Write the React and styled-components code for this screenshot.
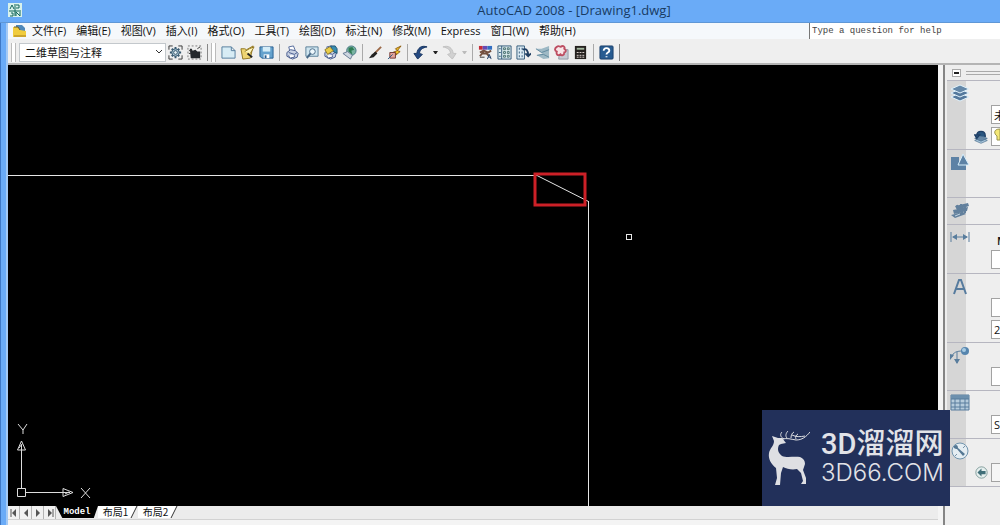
import React from 'react';
import styled, {createGlobalStyle} from "styled-components";


const GlobalStyle = createGlobalStyle`
  * {
    box-sizing: border-box;
  }

  body {
    margin: 0;
    font-family: "Open Sans", "Noto Sans CJK SC", sans-serif;
    color: #111;
    background: #6aabf7;
  }

  button, input, select {
    font: inherit;
    color: inherit;
    margin: 0;
    padding: 0;
    border: 0;
    border-radius: 0;
    background: none;
  }
`

const Window = styled.div`
  display: flex;
  flex-direction: column;
  height: 100vh;
  overflow: hidden;
  padding-left: 8px;
  background: linear-gradient(to right, #3e78c6 0 1px, #6aabf7 1px 6px, #a3c9f5 6px 8px);
`

const TitleBar = styled.header`
  display: grid;
  grid-template-columns: 16px 1fr 16px;
  align-items: center;
  height: 23px;
  margin-left: -8px;
  padding: 0 8px 3px;
  background: #6aabf7;
  border-bottom: 1px solid #5f97d6;
  flex: none;
`

const Title = styled.h1`
  margin: 0;
  padding-left: 148px;
  text-align: center;
  font-size: 13px;
  font-weight: 400;
  line-height: 18px;
  color: #183b63;
`

const MenuBar = styled.nav`
  display: flex;
  align-items: center;
  height: 16px;
  flex: none;
  padding-left: 5px;
  background: #f5f8fb;
`

const MenuList = styled.div`
  display: flex;
  gap: 10px;
  margin-left: 6px;
  flex: 1;
`

const MenuButton = styled.button`
  font-family: "Open Sans", "Noto Sans CJK SC", sans-serif;
  font-size: 11px;
  line-height: 16px;
  white-space: nowrap;
`

const HelpInput = styled.input`
  width: 191px;
  height: 16px;
  padding-left: 2px;
  background: #fff;
  border-left: 1px solid #777;
  font-family: "Liberation Mono", monospace;
  font-size: 9px;

  &::placeholder {
    color: #444;
    opacity: 1;
  }
`

const ToolBar = styled.div`
  display: flex;
  align-items: center;
  height: 26px;
  flex: none;
  padding: 2px 0 0 3px;
  background: #efefef;
  border-bottom: 2px solid #b4b4b4;
`

const Grip = styled.span`
  width: 5px;
  height: 19px;
  margin-right: 3px;
  border: solid #bbb;
  border-width: 0 1px;
  background: #fff;
`

const WorkspaceSelect = styled.select`
  appearance: none;
  width: 147px;
  height: 19px;
  padding-left: 5px;
  border: 1px solid #c3c8cc;
  background: #fff;
  font-family: "Noto Sans CJK SC", sans-serif;
  font-size: 11px;
  line-height: 17px;
`

const SelectWrap = styled.label`
  display: grid;
  align-items: center;

  & > * {
    grid-area: 1 / 1;
  }

  svg {
    justify-self: end;
    margin-right: 3px;
    pointer-events: none;
  }
`

const ToolButton = styled.button`
  display: flex;
  align-items: center;
  justify-content: center;
  flex: none;
  width: ${p => p.$narrow ? '10px' : '19px'};
  height: 20px;
`

const Separator = styled.span`
  width: 1px;
  height: 17px;
  margin: 0 3px;
  background: ${p => p.$edge ? '#888' : '#a9a9a9'};
  flex: none;
`

const Workspace = styled.div`
  display: flex;
  flex: 1;
  min-height: 0;
  background: #f4f4f4;
`

const DrawingArea = styled.main`
  display: flex;
  flex-direction: column;
  flex: 1;
  min-width: 0;
`

const Canvas = styled.div`
  position: relative;
  flex: 1;
  min-height: 0;
  background: #000;
`

const Drawing = styled.svg`
  display: block;
  width: 100%;
  height: 100%;
`

const UcsIcon = styled.svg`
  position: absolute;
  left: 6px;
  bottom: 3px;
`

const TabBar = styled.div`
  display: flex;
  height: 14px;
  flex: none;
  margin-bottom: 5px;
  background: #ececec;
  border-bottom: 1px solid #d2d2d2;
`

const NavButton = styled.button`
  display: flex;
  align-items: center;
  justify-content: center;
  width: 12px;
  height: 13px;
  border-right: 1px solid #b5b5b5;
  background: #f1f1f1;
`

const ModelTab = styled.button`
  width: 42px;
  height: 12px;
  background: #000;
  color: #fff;
  clip-path: polygon(0 0, 100% 0, 90% 100%, 15% 100%);
  font-family: "Liberation Mono", monospace;
  font-size: 9px;
  font-weight: 700;
  line-height: 12px;
`

const LayoutTab = styled.button`
  width: 32px;
  height: 12px;
  padding-left: 3px;
  background: #fff;
  font-family: "Noto Sans CJK SC", sans-serif;
  font-size: 10px;
  line-height: 12px;
  white-space: nowrap;
`

const Dashboard = styled.aside`
  width: 57px;
  flex: none;
  overflow: hidden;
  margin-left: 5px;
  border-left: 2px solid #858585;
  background: #eee;
`

const DashHead = styled.div`
  display: flex;
  align-items: center;
  gap: 5px;
  height: 15px;
  padding-left: 7px;
`

const CollapseButton = styled.button`
  display: flex;
  align-items: center;
  justify-content: center;
  width: 9px;
  height: 8px;
  border: 1px solid #aaa;
  background: #fff;
`

const HeadLine = styled.span`
  flex: 1;
  height: 4px;
  border: solid #aaa;
  border-width: 1px 0;
`

const Panel = styled.section`
  display: grid;
  grid-template-columns: 19px 1fr;
  height: ${p => p.$height}px;
  margin-left: 2px;
  border-top: 1px solid #b6b6c0;

  &:last-child {
    border-bottom: 1px solid #b6b6c0;
  }
`

const Rail = styled.div`
  padding: 2px 0 0 3px;
  background: #d6d6d6;

  svg {
    display: block;
    overflow: visible;
  }
`

const PanelBody = styled.div`
  display: flex;
  flex-direction: column;
  gap: 3px;
  padding-top: ${p => p.$top}px;
`

const PanelRow = styled.div`
  display: flex;
  align-items: center;
  justify-content: flex-end;
  gap: 3px;
  height: ${p => p.$short ? '12px' : '19px'};
`

// the panel is docked half open, the fields run under the window edge
const Field = styled.input`
  width: 9px;
  height: 19px;
  flex: none;
  padding-left: 2px;
  border: 1px solid #a2a2a2;
  border-right: 0;
  background: ${p => p.$dim ? '#f5f5f5' : '#fff'};
  font-size: 11px;
`

const FieldCaption = styled.span`
  width: 3px;
  overflow: hidden;
  font-size: 11px;
  font-weight: 600;
  line-height: 12px;
`

const Watermark = styled.div`
  position: fixed;
  right: 50px;
  bottom: 19px;
  display: flex;
  align-items: center;
  gap: 11px;
  width: 188px;
  height: 96px;
  padding-left: 6px;
  background: #22305a;
  color: #e2e3e8;
`

const BrandName = styled.div`
  font-family: "Roboto", "Noto Sans CJK SC", sans-serif;
  font-size: 29px;
  font-weight: 500;
  line-height: 30px;
  white-space: nowrap;
`

const BrandSite = styled.div`
  font-family: "Inter", sans-serif;
  font-size: 24px;
  font-weight: 300;
  line-height: 28px;
  white-space: nowrap;
`

const Icon = ({children, size = 15, box = 16}) => (
    <svg width={size} height={size} viewBox={`0 0 ${box} ${box}`} fill="none" aria-hidden="true">{children}</svg>
)

const Printer = () => <>
    <path d="M5 6 4 2l5-1 2 5" fill="#fff" stroke="#51679a"/>
    <path d="M2 8l4-3 5 1 3 3-1 4-5 2-6-3z" fill="#c9d2e4" stroke="#455a8c"/>
    <path d="M4 8l6 2 3-2" stroke="#455a8c"/>
    <path d="M4 11l1 3 5-1v-2" fill="#fff" stroke="#455a8c"/>
</>

const icons = {
    gear: <>
        <path d="M1 5V1h4M11 1h4v4M15 11v4h-4M5 15H1v-4" stroke="#333"/>
        <path d="M8 2v12M2 8h12M4 4l8 8M12 4l-8 8" stroke="#35566d" strokeWidth="2"/>
        <circle cx="8" cy="8" r="4" fill="#a9c3d2" stroke="#35566d"/>
        <circle cx="8" cy="8" r="2" fill="#e8f2f6" stroke="#35566d"/>
    </>,
    workspace: <>
        <path d="M1 1h14v14H1z" stroke="#777" strokeDasharray="2 2"/>
        <path d="M3 4h2l1 2 3-1 2 2h3v7H4z" fill="#24282c"/>
        <path d="M2 6h3M2 9h2M11 4l3-2" stroke="#333"/>
    </>,
    new: <path d="M1 2h10l4 4v8H1zM11 2v4h4" fill="#d7ecf5" stroke="#527c9d"/>,
    open: <>
        <path d="M1 4h4l2 1 7-4-3 13-8 1z" fill="#efd572" stroke="#8f7420"/>
        <path d="M5 7l5-3 5-2-4 7" fill="#fff6bd" stroke="#8f7420"/>
        <path d="M8 9l5 4" stroke="#222" strokeWidth="2"/>
    </>,
    save: <>
        <path d="M1 2h14v12H3l-2-2z" fill="#65a2cd" stroke="#285f91"/>
        <path d="M4 2h8v5H4z" fill="#d5edf8"/>
        <path d="M5 10h6v4H5z" fill="#fff"/>
        <path d="M6 11h2v3H6z" fill="#285f91"/>
    </>,
    print: <Printer/>,
    preview: <>
        <path d="M2 2h13v10H2z" fill="#cfe5ef" stroke="#587d98"/>
        <circle cx="9" cy="7" r="3" fill="#eef8fc" stroke="#466785"/>
        <path d="M7 9l-4 5" stroke="#466785" strokeWidth="2"/>
    </>,
    publish: <>
        <Printer/>
        <path d="M8 1h5l2 3v5l-4-2z" fill="#388cae" stroke="#1f5374"/>
        <path d="M2 5l5-3 4 4-6 4z" fill="#e9ce4a" stroke="#8e7923"/>
    </>,
    globe: <>
        <circle cx="10" cy="6" r="5" fill="#79b3a0" stroke="#497786"/>
        <path d="M7 3l4-1 2 3-3 1 1 4-4-3z" fill="#2e7c54"/>
        <path d="M1 9l5-2 5 4-2 4z" fill="#cdd5df" stroke="#647993"/>
    </>,
    brush: <>
        <path d="M14 2 7 9" stroke="#9b6847" strokeWidth="2"/>
        <path d="M8 7l2 2-4 4-5 1 3-4z" fill="#222"/>
    </>,
    match: <>
        <path d="M15 1 9 4l2 2-5 2 4 1-2 3 6-5-3-1z" fill="#f8ca25" stroke="#8d5c12"/>
        <path d="M3 8h6v6H3z" fill="#e3a39a" stroke="#733b35"/>
        <path d="M1 15l5-5" stroke="#285983"/>
    </>,
    undo: <path d="M15 2C9 0 5 3 4 9H1l4 6 5-5-3-1c0-4 3-6 8-7z" fill="#254a83" stroke="#18345f"/>,
    redo: <path d="M1 2c6-2 10 1 11 7h3l-4 6-5-5 3-1c0-4-3-6-8-7z" fill="#d1d1d1" stroke="#c0c0c0"/>,
    properties: <>
        <path d="M1 1h4v4H1z" fill="#c52b35"/>
        <path d="M5 1h5v4H5z" fill="#6849b3"/>
        <path d="M10 1h5v4h-5z" fill="#326fc3"/>
        <path d="M2 8l4-2 5 2 3-2M4 9h5l3 3M2 12l4-5" stroke="#73503f" strokeWidth="2"/>
        <path d="M10 15l2-5 2 5M11 13h3" stroke="#24436c"/>
        <path d="M2 13h5" stroke="#333"/>
    </>,
    center: <>
        <path d="M1 1h14v14H1z" fill="#ddecef" stroke="#315778"/>
        <path d="M5 1v14M2 4h2M2 8h2M2 12h2" stroke="#315778"/>
        <path d="M7 3h2v2H7zM11 3h2v2h-2zM7 7h2v2H7zM11 7h2v2h-2zM7 11h2v2H7zM11 11h2v2h-2z" stroke="#47706f"/>
    </>,
    palette: <>
        <path d="M1 1h8v14H1z" fill="#ddecf5" stroke="#315778"/>
        <path d="M3 4h1M6 4h1M3 8h1M6 8h1M3 12h1M6 12h1" stroke="#315778" strokeWidth="2"/>
        <path d="M7 5c4-2 6 1 6 6M10 9l3 3 3-3" stroke="#203f63" strokeWidth="2"/>
    </>,
    sheets: <>
        <path d="M1 4h6l8-3v13l-6 1-7-4 6-2z" fill="#9eb9c5"/>
        <path d="M1 4l6 4 8-3M2 11l7-1 6 3" stroke="#60899e"/>
    </>,
    markup: <>
        <path d="M6 5h9v10H5z" fill="#c7cbd3" stroke="#9299a4"/>
        <path d="M3 2c2-2 3 0 4 0 3-2 5 0 4 2 3 2 1 4 0 4 0 3-3 4-4 2-3 2-5 0-4-3-3-1-2-4 0-5z" fill="#f9e5e7" stroke="#bd4d61" strokeWidth="2"/>
    </>,
    calc: <>
        <path d="M2 1h12v14H2z" fill="#25211f"/>
        <path d="M4 3h8v2H4z" fill="#a3b79e"/>
        <path d="M4 8h8M4 11h8M4 13h8" stroke="#e3d9d4" strokeDasharray="2 1"/>
    </>,
    help: <>
        <rect x="1" y="1" width="14" height="14" rx="1" fill="#285c91" stroke="#1c406b"/>
        <path d="M5 6c0-4 6-3 6 0 0 2-3 2-3 4M8 12v1" stroke="#fff" strokeWidth="2"/>
    </>,
}

const toolbar = [
    ['new', 'New'], ['open', 'Open'], ['save', 'Save'], null,
    ['print', 'Plot'], ['preview', 'Plot preview'], ['publish', 'Publish'], ['globe', '3DDWF'], null,
    ['brush', 'Match properties'], ['match', 'Block editor'], null,
    ['undo', 'Undo', '#222'], ['redo', 'Redo', '#bbb'], null,
    ['properties', 'Properties'], ['center', 'DesignCenter'], ['palette', 'Tool palettes'],
    ['sheets', 'Sheet set manager'], ['markup', 'Markup set manager'], ['calc', 'QuickCalc'], null,
    ['help', 'Help'],
]

const menus = ['文件(F)', '编辑(E)', '视图(V)', '插入(I)', '格式(O)', '工具(T)', '绘图(D)', '标注(N)', '修改(M)', 'Express', '窗口(W)', '帮助(H)']

const railIcons = {
    layers: <>
        <path d="M1 14l9-4 9 4-9 4z" fill="#54799d" stroke="#e2f3fc"/>
        <path d="M1 10l9-4 9 4-9 4z" fill="#54799d" stroke="#e2f3fc"/>
        <path d="M1 6l9-4 9 4-9 4z" fill="#6488a9" stroke="#e2f3fc"/>
    </>,
    shapes: <>
        <path d="M1 5h8v5h7v8H1z" fill="#5d82a5"/>
        <path d="M13 2l6 11H8z" fill="#5d82a5" stroke="#d8effb"/>
    </>,
    blocks: <>
        <path d="M5 6l13-3 1 3-12 4zM3 10l15-3-1 4-13 3zM1 15l12-3 3 2-11 4z" fill="#62809d"/>
        <path d="M7 5l2 9M11 4l1 10M15 4v9" stroke="#62809d" strokeWidth="2"/>
        <path d="M5 16l5-2" stroke="#c4d7e5"/>
    </>,
    dimension: <>
        <path d="M1 5v10M19 5v10M3 10h14" stroke="#587d9d"/>
        <path d="M2 10l5-3v6zM18 10l-5-3v6z" fill="#587d9d"/>
    </>,
    text: <path d="M4 18 9 4h2l5 14M6 13h8" stroke="#567b9e" strokeWidth="2"/>,
    leader: <>
        <path d="M2 12c1-5 5-6 11-6M7 7v11" stroke="#587d9d"/>
        <path d="M0 9l4 1-4 5zM4 14h6l-3 5z" fill="#587d9d"/>
        <circle cx="15" cy="6" r="4" fill="#5685ae"/>
        <circle cx="14" cy="5" r="2" fill="#a7cbe3"/>
    </>,
    table: <>
        <path d="M1 2h18v15H1z" fill="#b6ccdc" stroke="#587d9d"/>
        <path d="M1 2h18v4H1z" fill="#6d90ae"/>
        <path d="M1 6h18M1 10h18M1 14h18M5 6v11M10 6v11M15 6v11" stroke="#587d9d"/>
    </>,
    navigate: <>
        <circle cx="10" cy="10" r="8" fill="#e4edf2" stroke="#7094ae"/>
        <path d="M4 5c2-2 4-1 4 2l7 6-2 2-6-7c-2 0-4-1-3-3z" fill="#557894"/>
        <path d="M15 5l-2 2M5 15l2-2" stroke="#7892a8"/>
    </>,
}

const RailIcon = ({name}) => <Rail><Icon size={20} box={20}>{railIcons[name]}</Icon></Rail>

const Arrow = ({flip, bar}) => (
    <svg width="8" height="8" viewBox="0 0 8 8" aria-hidden="true">
        <g transform={flip ? 'translate(8 0) scale(-1 1)' : undefined}>
            <path d="M6 0v8L2 4z" fill="#555"/>
            {bar && <path d="M1 0v8" stroke="#555"/>}
        </g>
    </svg>
)

const Slash = () => (
    <svg width="8" height="12" viewBox="0 0 8 12" aria-hidden="true">
        <path d="M0 0h7L1 12H0z" fill="#fff"/>
        <path d="M7 0 1 12" stroke="#333"/>
    </svg>
)

const Deer = () => (
    <svg width="42" height="55" viewBox="0 0 42 55" aria-hidden="true">
        <path d="M14 8C20 7 22 8 28 9 34 9 38 6 42 1M16 8C12 6 12 3 14 1M19 7C17 5 18 2 20 0M23 7c0-3 1-5 3-6M28 8c-1-2 0-4 2-5M24 4c4 2 8 2 13 1" fill="none" stroke="#dedfe3"/>
        <path d="M4 5l6 2 4 0 4 5-5 1-2 1c-2 4-1 8 3 11 5 2 12 0 18 1 4 2 5 4 5 7l-2 6 3 8v6h-5l2-3-2-8-4-4c-5 1-10 0-14-2l-2 6-1 12H7l2-7-1-10C3 33 0 28 1 22c1-5 5-7 5-12z" fill="#dedfe3"/>
    </svg>
)

const App = () => {
    return (
        <>
            <GlobalStyle/>
            <Window>
                <TitleBar>
                    <svg width="14" height="14" viewBox="0 0 14 14" aria-hidden="true">
                        <path d="M0 0h14v14H0z" fill="#d8f2eb"/>
                        <path d="M2 6l2-4 2 4M8 2h3v3H8M1 8h12M3 10h2v3H2M8 13V9l4 4V9M7 1v12" fill="none" stroke="#12665b"/>
                    </svg>
                    <Title>AutoCAD 2008 - [Drawing1.dwg]</Title>
                </TitleBar>

                <MenuBar>
                    <svg width="13" height="14" viewBox="0 0 13 14" aria-hidden="true">
                        <path d="M3 1h6l3 3v7H3z" fill="#4f88b9"/>
                        <path d="M0 3h5l2 3 6 1v6H0z" fill="#f0cc3e"/>
                        <path d="M1 3h4l2 3" fill="none" stroke="#665927"/>
                        <path d="M1 12h12" stroke="#a87e1e"/>
                    </svg>
                    <MenuList>
                        {menus.map(name => <MenuButton key={name}>{name}</MenuButton>)}
                    </MenuList>
                    <HelpInput aria-label="Help" placeholder="Type a question for help"/>
                </MenuBar>

                <ToolBar>
                    <Grip/>
                    <SelectWrap>
                        <WorkspaceSelect aria-label="Workspace">
                            <option>二维草图与注释</option>
                        </WorkspaceSelect>
                        <svg width="8" height="6" viewBox="0 0 8 6" aria-hidden="true">
                            <path d="M1 1l3 3 3-3" fill="none" stroke="#333"/>
                        </svg>
                    </SelectWrap>
                    <ToolButton aria-label="Workspace settings"><Icon>{icons.gear}</Icon></ToolButton>
                    <ToolButton aria-label="My workspace"><Icon>{icons.workspace}</Icon></ToolButton>
                    <Separator $edge/>
                    <Grip/>
                    {toolbar.map((tool, i) => {
                        if (!tool) return <Separator key={i}/>
                        const [name, label, drop] = tool
                        return (
                            <React.Fragment key={i}>
                                <ToolButton aria-label={label}><Icon>{icons[name]}</Icon></ToolButton>
                                {drop &&
                                    <ToolButton $narrow aria-label={label + ' list'}>
                                        <svg width="5" height="3" viewBox="0 0 5 3"><path d="M0 0h5L3 3H2z" fill={drop}/></svg>
                                    </ToolButton>
                                }
                            </React.Fragment>
                        )
                    })}
                    <Separator $edge/>
                </ToolBar>

                <Workspace>
                    <DrawingArea>
                        <Canvas>
                            <Drawing role="img" aria-label="Chamfered corner">
                                <g stroke="#e6e6e6" fill="none">
                                    <path d="M0 110.500H529L580.500 136.500"/>
                                    <line x1="580.500" y1="136" x2="580.500" y2="100%"/>
                                    <rect x="618.500" y="169.500" width="5" height="5"/>
                                </g>
                                <rect x="527" y="109" width="50" height="31" fill="none" stroke="#cc2027" strokeWidth="3"/>
                            </Drawing>
                            <UcsIcon width="80" height="80" viewBox="0 0 80 80" fill="none" stroke="#ddd">
                                <path d="M3.500 65.500h8v8h-8zM7.500 65V22M12 69.500h44"/>
                                <path d="M7.500 18l4 9h-8zM59 69.500l-10-4v8zM5 25l3-4M51 71l4-2"/>
                                <path d="M4 1l5 6 4-6M9 7v4M67 65l9 10M76 65l-9 10"/>
                            </UcsIcon>
                        </Canvas>
                        <TabBar>
                            <NavButton aria-label="First tab"><Arrow bar/></NavButton>
                            <NavButton aria-label="Previous tab"><Arrow/></NavButton>
                            <NavButton aria-label="Next tab"><Arrow flip/></NavButton>
                            <NavButton aria-label="Last tab"><Arrow flip bar/></NavButton>
                            <ModelTab>Model</ModelTab>
                            <LayoutTab>布局1</LayoutTab>
                            <Slash/>
                            <LayoutTab>布局2</LayoutTab>
                            <Slash/>
                        </TabBar>
                    </DrawingArea>

                    <Dashboard>
                        <DashHead>
                            <CollapseButton aria-label="Collapse">
                                <svg width="5" height="2"><path d="M0 0h5v2H0z" fill="#222"/></svg>
                            </CollapseButton>
                            <HeadLine/>
                        </DashHead>
                        <Panel $height={69}>
                            <RailIcon name="layers"/>
                            <PanelBody $top={24}>
                                <PanelRow><Field aria-label="Layer state" defaultValue="未"/></PanelRow>
                                <PanelRow>
                                    <Icon size={14} box={20}>
                                        <path d="M1 15l9-4 9 4-9 4z" fill="#a9c6dc" stroke="#4d718f"/>
                                        <path d="M1 12l9-4 9 4-9 4z" fill="#6687a6" stroke="#4d718f"/>
                                        <path d="M4 8c0-8 12-8 12 0v2M1 7h7l-4 5z" fill="#29557f" stroke="#1f3f66" strokeWidth="2"/>
                                    </Icon>
                                    <Field as="button" aria-label="Layer">
                                        <svg width="6" height="14" viewBox="0 0 6 14"><path d="M6 1C-1 1 0 6 3 8v4h3z" fill="#f4e877" stroke="#9a944d"/></svg>
                                    </Field>
                                </PanelRow>
                            </PanelBody>
                        </Panel>
                        <Panel $height={48}><RailIcon name="shapes"/></Panel>
                        <Panel $height={27}><RailIcon name="blocks"/></Panel>
                        <Panel $height={49}>
                            <RailIcon name="dimension"/>
                            <PanelBody $top={10}>
                                <PanelRow $short><FieldCaption>M</FieldCaption></PanelRow>
                                <PanelRow><Field aria-label="Dimension style"/></PanelRow>
                            </PanelBody>
                        </Panel>
                        <Panel $height={69}>
                            <RailIcon name="text"/>
                            <PanelBody $top={24}>
                                <PanelRow><Field aria-label="Text style"/></PanelRow>
                                <PanelRow><Field aria-label="Text height" defaultValue="2"/></PanelRow>
                            </PanelBody>
                        </Panel>
                        <Panel $height={48}>
                            <RailIcon name="leader"/>
                            <PanelBody $top={24}><PanelRow><Field aria-label="Leader style"/></PanelRow></PanelBody>
                        </Panel>
                        <Panel $height={48}>
                            <RailIcon name="table"/>
                            <PanelBody $top={24}><PanelRow><Field aria-label="Table style" defaultValue="S"/></PanelRow></PanelBody>
                        </Panel>
                        <Panel $height={49}>
                            <RailIcon name="navigate"/>
                            <PanelBody $top={24}>
                                <PanelRow>
                                    <Icon size={13}>
                                        <circle cx="8" cy="8" r="7" fill="#e6efee" stroke="#71908f"/>
                                        <path d="M3 8l5-5v3h5v4H8v3z" fill="#406e78"/>
                                    </Icon>
                                    <Field $dim aria-label="View"/>
                                </PanelRow>
                            </PanelBody>
                        </Panel>
                    </Dashboard>
                </Workspace>
            </Window>
            <Watermark>
                <Deer/>
                <div>
                    <BrandName>3D溜溜网</BrandName>
                    <BrandSite>3D66.COM</BrandSite>
                </div>
            </Watermark>
        </>
    );
}

export default App;
